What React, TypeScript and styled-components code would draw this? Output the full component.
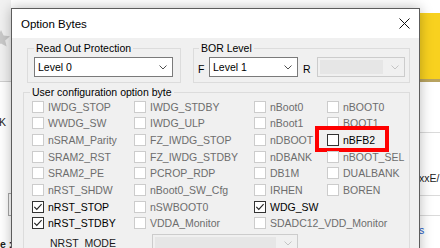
import styled, { createGlobalStyle } from "styled-components";

type Opt = { label: string; enabled?: boolean; checked?: boolean; marked?: boolean } | null;

const opt = (label: string, extra: Partial<NonNullable<Opt>> = {}): Opt => ({ label, ...extra });

const optionRows: Opt[][] = [
  [opt("IWDG_STOP"), opt("IWDG_STDBY"), opt("nBoot0"), opt("nBOOT0")],
  [opt("WWDG_SW"), opt("IWDG_ULP"), opt("nBoot1"), opt("BOOT1")],
  [opt("nSRAM_Parity"), opt("FZ_IWDG_STOP"), opt("nDBOOT"), opt("nBFB2", { enabled: true, marked: true })],
  [opt("SRAM2_RST"), opt("FZ_IWDG_STDBY"), opt("nDBANK"), opt("nBOOT_SEL")],
  [opt("SRAM2_PE"), opt("PCROP_RDP"), opt("DB1M"), opt("DUALBANK")],
  [opt("nRST_SHDW"), opt("nBoot0_SW_Cfg"), opt("IRHEN"), opt("BOREN")],
  [opt("nRST_STOP", { enabled: true, checked: true }), opt("nSWBOOT0"), opt("WDG_SW", { enabled: true, checked: true }), null],
  [opt("nRST_STDBY", { enabled: true, checked: true }), opt("VDDA_Monitor"), opt("SDADC12_VDD_Monitor"), null],
];

const Chevron = ({ color }: { color: string }) => (
  <svg width="8" height="5" viewBox="0 0 8 5">
    <polyline points="0.5,0.5 4,4 7.5,0.5" fill="none" stroke={color} strokeWidth="1" />
  </svg>
);

const Select = ({ value, disabled }: { value?: string; disabled?: boolean }) => (
  <SelectBox $disabled={disabled}>
    {disabled ? <EmptyField /> : <SelectValue>{value}</SelectValue>}
    <Chevron color={disabled ? "#c4c4c4" : "#505050"} />
  </SelectBox>
);

const CheckItem = ({ item }: { item: Opt }) => {
  if (!item) return <Cell />;
  return (
    <Cell>
      <Box $enabled={item.enabled}>
        {item.checked && (
          <svg width="10" height="10" viewBox="0 0 10 10">
            <polyline points="1.3,4.8 3.8,7.4 8.6,2.2" fill="none" stroke="#222" strokeWidth="1.1" />
          </svg>
        )}
      </Box>
      <CheckLabel $enabled={item.enabled}>{item.label}</CheckLabel>
      {item.marked && <Marker />}
    </Cell>
  );
};

const App = () => {
  return (
    <>
      <GlobalStyle />
      <Desktop>
        <LeftStrip>
          <Toolbar>
            <svg width="20" height="17" viewBox="0 0 20 17" style={{ marginLeft: -9, marginTop: 30 }}>
              <polygon points="10,0 12.6,5.6 19,6.2 14.2,10.4 15.6,16.6 10,13.4 4.4,16.6 5.8,10.4 1,6.2 7.4,5.6" fill="#c9c9c9" />
            </svg>
          </Toolbar>
          <BackText $top={34}>K</BackText>
          <BackInput />
          <BackText $top={22} $bold>e :</BackText>
        </LeftStrip>

        <Dialog>
          <TitleBar>
            <Title>Option Bytes</Title>
            <svg width="11" height="11" viewBox="0 0 11 11">
              <path d="M0.5 0.5 L10.5 10.5 M10.5 0.5 L0.5 10.5" stroke="#111" strokeWidth="1" />
            </svg>
          </TitleBar>

          <Body>
            <TopRow>
              <ReadGroup>
                <Legend>Read Out Protection</Legend>
                <Select value="Level 0" />
              </ReadGroup>
              <BorGroup>
                <Legend $shift={1}>BOR Level</Legend>
                <BorRow>
                  <FieldLabel>F</FieldLabel>
                  <SelectSlot $width={89}>
                    <Select value="Level 1" />
                  </SelectSlot>
                  <FieldLabel $pad={5}>R</FieldLabel>
                  <SelectSlot>
                    <Select disabled />
                  </SelectSlot>
                </BorRow>
              </BorGroup>
            </TopRow>

            <UserGroup>
              <Legend>User configuration option byte</Legend>
              <OptionGrid>
                {optionRows.flat().map((item, i) => (
                  <CheckItem key={i} item={item} />
                ))}
                <ModeRow>
                  <ModeLabel>NRST_MODE</ModeLabel>
                  <ModeSelect>
                    <Select disabled />
                  </ModeSelect>
                </ModeRow>
              </OptionGrid>
            </UserGroup>
          </Body>
        </Dialog>

        <RightStrip>
          <Banner />
          <RightLine $top={50} />
          <BackText $top={39}>xxE/</BackText>
          <RightLine $top={11} />
          <RightLine $top={19} />
          <BackText $top={8} $blue>s</BackText>
        </RightStrip>
      </Desktop>
    </>
  );
};

const GlobalStyle = createGlobalStyle`
  html, body {
    margin: 0;
    padding: 0;
  }
  body {
    width: 440px;
    height: 248px;
    overflow: hidden;
    background: #ffffff;
    font-family: "Liberation Sans", Arial, sans-serif;
    font-size: 10.5px;
    color: #000;
  }
`;

const Desktop = styled.div`
  display: flex;
  width: 440px;
  height: 248px;
  overflow: hidden;
`;

const LeftStrip = styled.div`
  width: 11px;
  flex: none;
  display: flex;
  flex-direction: column;
  overflow: hidden;
`;

const Toolbar = styled.div`
  height: 81px;
  flex: none;
  background: #f1f1f1;
  border-bottom: 1px solid #cfcfcf;
  overflow: hidden;
`;

const BackText = styled.div<{ $top: number; $bold?: boolean; $blue?: boolean }>`
  margin-top: ${(p) => p.$top}px;
  line-height: 12px;
  flex: none;
  white-space: nowrap;
  font-weight: ${(p) => (p.$bold ? 700 : 400)};
  color: ${(p) => (p.$blue ? "#1e5bc6" : "#222")};
  margin-left: ${(p) => (p.$bold ? 0 : -1)}px;
`;

const BackInput = styled.div`
  margin-top: 65px;
  margin-left: 8px;
  height: 21px;
  flex: none;
  border: 1px solid #a8a8a8;
  border-right: none;
`;

const RightStrip = styled.div`
  width: 20px;
  flex: none;
  display: flex;
  flex-direction: column;
  overflow: hidden;
`;

const Banner = styled.div`
  margin-top: 13px;
  height: 66px;
  flex: none;
  background: #f8d11f;
  border-bottom: 3px solid #b8a360;
`;

const RightLine = styled.div<{ $top: number }>`
  margin-top: ${(p) => p.$top}px;
  height: 1px;
  flex: none;
  background: #dadada;
`;

const Dialog = styled.div`
  position: relative;
  z-index: 1;
  flex: none;
  box-sizing: border-box;
  width: 409px;
  height: 270px;
  margin-top: 8px;
  border: 1px solid #5c5c5c;
  background: #f0f0f0;
  box-shadow: 0 0 12px rgba(0, 0, 0, 0.28);
`;

const TitleBar = styled.div`
  height: 29px;
  background: #ffffff;
  display: flex;
  align-items: center;
  justify-content: space-between;
  padding: 0 9px 0 9px;
`;

const Title = styled.div`
  font-size: 11.5px;
  color: #000;
`;

const Body = styled.div`
  padding-top: 4px;
`;

const TopRow = styled.div`
  display: flex;
  gap: 12px;
  padding-left: 15px;
`;

const Group = styled.fieldset`
  margin: 0;
  min-width: 0;
  box-sizing: border-box;
  border: 1px solid #dcdcdc;
  border-radius: 0;
`;

const ReadGroup = styled(Group)`
  width: 154px;
  padding: 3px 7px 5px 6px;
`;

const BorGroup = styled(Group)`
  width: 217px;
  padding: 3px 4px 5px 4px;
`;

const UserGroup = styled(Group)`
  width: 387px;
  margin: 3px 0 0 11px;
  padding: 0 0 0 6px;
`;

const Legend = styled.legend<{ $shift?: number }>`
  padding: 0 2px;
  margin-left: ${(p) => p.$shift ?? 0}px;
  line-height: 12px;
  font-size: 10.5px;
  color: #000;
`;

const BorRow = styled.div`
  display: flex;
  align-items: center;
`;

const FieldLabel = styled.div<{ $pad?: number }>`
  box-sizing: border-box;
  width: ${(p) => 11 + (p.$pad ?? 0) + (p.$pad ? 3 : 0)}px;
  padding-left: ${(p) => p.$pad ?? 0}px;
  padding-top: 3px;
  flex: none;
  font-size: 10.5px;
`;

const SelectSlot = styled.div<{ $width?: number }>`
  flex: ${(p) => (p.$width ? "none" : "1")};
  width: ${(p) => (p.$width ? `${p.$width}px` : "auto")};
`;

const SelectBox = styled.div<{ $disabled?: boolean }>`
  box-sizing: border-box;
  height: 20px;
  display: flex;
  align-items: center;
  padding: ${(p) => (p.$disabled ? "0 5px 0 2px" : "0 5px 0 3px")};
  gap: ${(p) => (p.$disabled ? "8px" : "0")};
  border: 1px solid ${(p) => (p.$disabled ? "#cccccc" : "#7a7a7a")};
  background: ${(p) => (p.$disabled ? "#f0f0f0" : "#ffffff")};
`;

const SelectValue = styled.div`
  flex: 1;
  white-space: nowrap;
  overflow: hidden;
`;

const EmptyField = styled.div`
  flex: 1;
  height: 14px;
  background: #e6e6e6;
`;

const OptionGrid = styled.div`
  display: grid;
  grid-template-columns: 102px 120px 73px 1fr;
  grid-auto-rows: 16.67px;
  margin-left: 2px;
  padding-top: 0.4px;
`;

const Cell = styled.div`
  position: relative;
  display: flex;
  align-items: center;
  gap: 4px;
  white-space: nowrap;
`;

const Box = styled.div<{ $enabled?: boolean }>`
  box-sizing: border-box;
  width: 12px;
  height: 12px;
  flex: none;
  display: flex;
  align-items: center;
  justify-content: center;
  background: #ffffff;
  border: 1px solid ${(p) => (p.$enabled ? "#333333" : "#cccccc")};
`;

const CheckLabel = styled.span<{ $enabled?: boolean }>`
  color: ${(p) => (p.$enabled ? "#000000" : "#6d6d6d")};
`;

const Marker = styled.div`
  position: absolute;
  left: -12px;
  top: -6px;
  width: 74px;
  height: 26px;
  box-sizing: border-box;
  border: 4px solid #ff0000;
`;

const ModeRow = styled.div`
  grid-column: 1 / -1;
  display: flex;
  align-items: flex-start;
  height: 22px;
`;

const ModeLabel = styled.div`
  width: 102px;
  flex: none;
  text-align: center;
  line-height: 22px;
  color: #1a1a1a;
`;

const ModeSelect = styled.div`
  width: 146px;
  margin: 2px 0 0 18px;
`;

export default App;
